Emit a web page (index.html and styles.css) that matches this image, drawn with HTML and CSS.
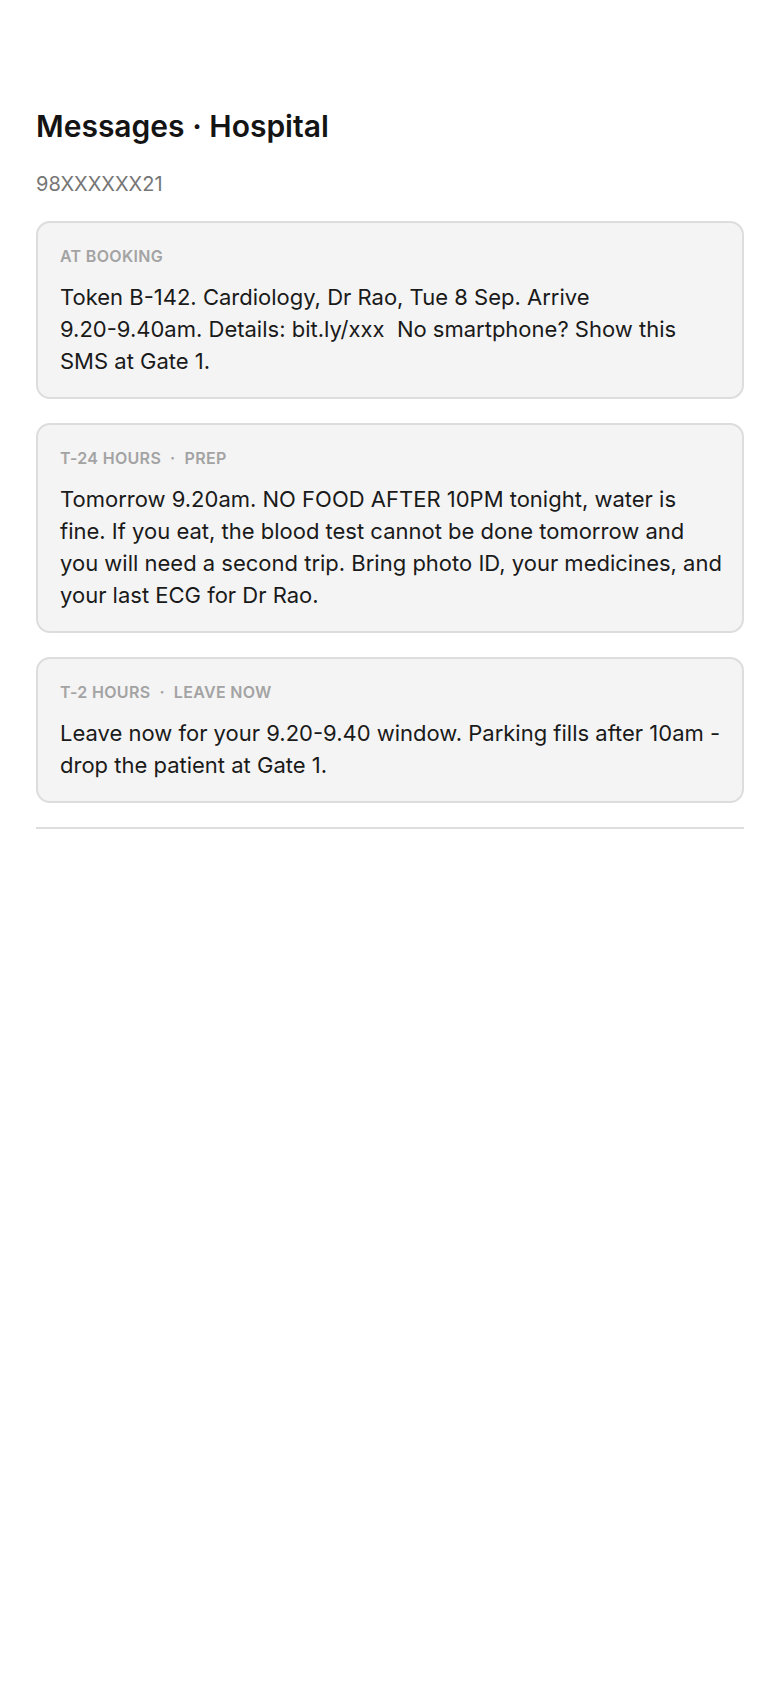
FILE: index.html
```html
<!DOCTYPE html>
<html lang="en">
<head>
    <meta charset="UTF-8">
    <title>Messages · Hospital</title>
    <link rel="stylesheet" href="styles.css">
</head>
<body>
    <div class="page">
        <h1 class="title">Messages · Hospital</h1>
        <div class="phone">98XXXXXX21</div>

        <div class="messages">
            <div class="message">
                <div class="message-label">AT BOOKING</div>
                <div class="message-text">Token B-142. Cardiology, Dr Rao, Tue 8 Sep. Arrive 9.20-&#8288;9.40am.&nbsp;Details: bit.ly/xxx&nbsp; No smartphone? Show this SMS at Gate 1.</div>
            </div>

            <div class="message">
                <div class="message-label">T-24 HOURS<span class="dot">·</span>PREP</div>
                <div class="message-text">Tomorrow 9.20am. NO FOOD AFTER 10PM tonight, water is fine. If you eat, the blood test cannot be done tomorrow and you will need a second trip. Bring photo ID, your medicines, and your last ECG for Dr Rao.</div>
            </div>

            <div class="message">
                <div class="message-label">T-2 HOURS<span class="dot">·</span>LEAVE NOW</div>
                <div class="message-text">Leave now for your 9.20-&#8288;9.40 window. Parking fills after 10am&nbsp;- drop the patient at Gate 1.</div>
            </div>
        </div>

        <div class="divider"></div>
    </div>
</body>
</html>
```

FILE: styles.css
```css
body {
    margin: 0;
    font-family: Inter, "Noto Sans", sans-serif;
    background-color: #ffffff;
    color: #161616;
}

.page {
    padding: 108px 36px 40px;
}

.title {
    font-size: 30px;
    line-height: 36px;
    font-weight: 600;
    margin: 0 0 26px;
    color: #141414;
}

.phone {
    font-size: 20px;
    line-height: 28px;
    color: #767676;
    margin-bottom: 23px;
}

.messages {
    display: flex;
    flex-direction: column;
    gap: 24px;
}

.message {
    background-color: #f4f4f4;
    border: 2px solid #dddddd;
    border-radius: 14px;
    padding: 22px 19px 20px 22px;
}

.message-label {
    font-size: 16px;
    line-height: 22px;
    font-weight: 600;
    letter-spacing: 0.02em;
    color: #a3a3a3;
    margin-bottom: 14px;
}

.message-label .dot {
    margin: 0 9px;
}

.message-text {
    font-size: 22px;
    line-height: 32px;
    color: #1a1a1a;
}

.divider {
    height: 2px;
    background-color: #dddddd;
    margin-top: 24px;
}
```
